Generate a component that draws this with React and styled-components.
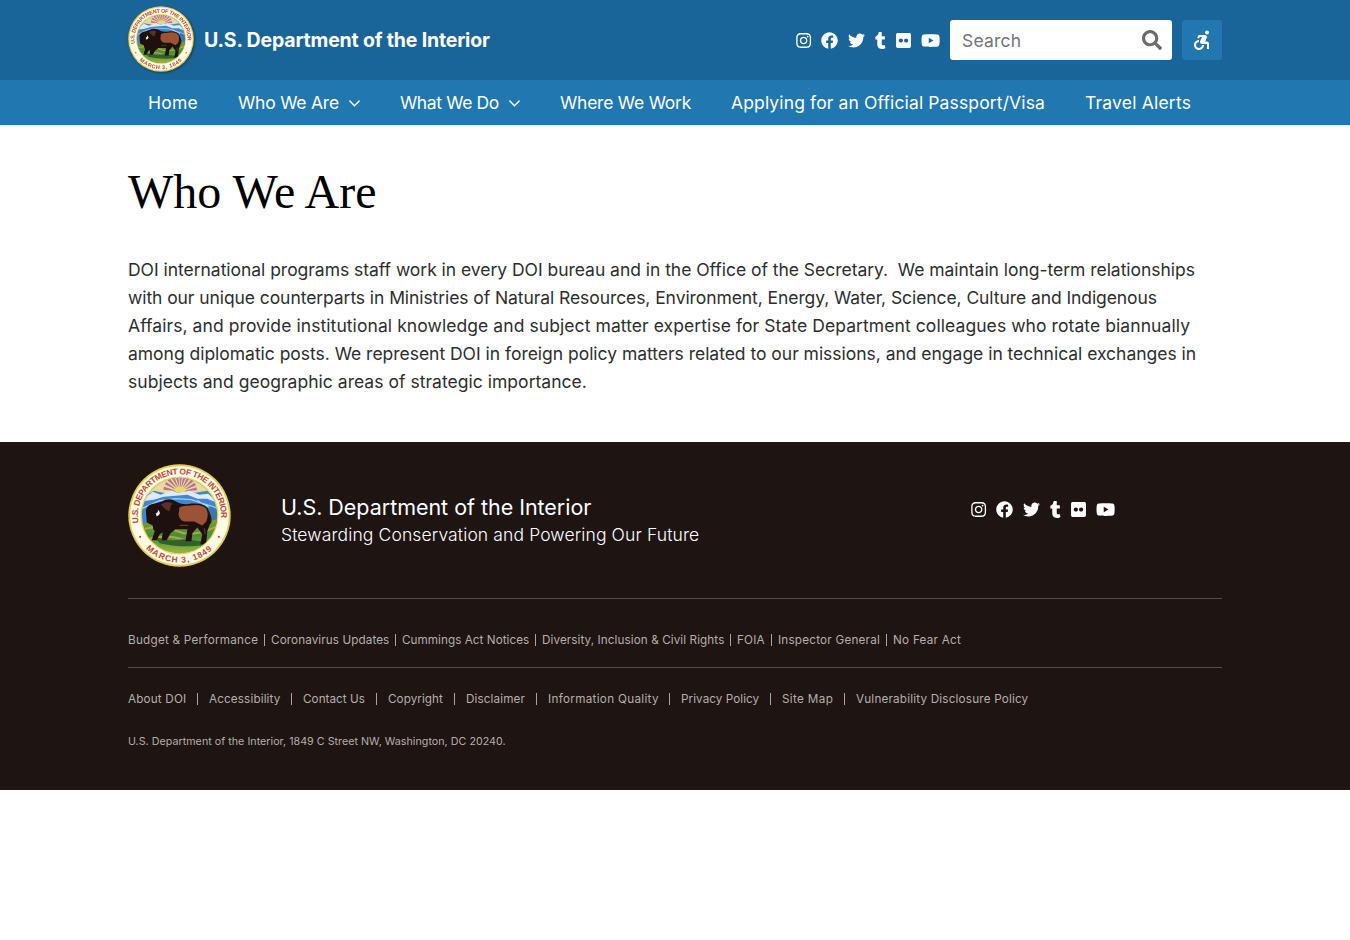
import React from "react";
import styled, { createGlobalStyle } from "styled-components";
import {
  FaInstagram,
  FaFacebook,
  FaTwitter,
  FaTumblr,
  FaFlickr,
  FaYoutube,
  FaSearch,
} from "react-icons/fa";
import { MdAccessibleForward } from "react-icons/md";

const GlobalStyle = createGlobalStyle`
  *, *::before, *::after { box-sizing: border-box; }
  body {
    margin: 0;
    background: #fff;
    color: #2e2e2e;
    font-family: Inter, "Liberation Sans", sans-serif;
  }
  a { color: inherit; text-decoration: none; }
`;

const Container = styled.div`
  width: 1094px;
  margin: 0 auto;
`;

const Header = styled.header`
  height: 80px;
  background: #196498;
`;

const HeaderInner = styled(Container)`
  display: flex;
  align-items: center;
  height: 80px;
`;

const SealSvg = styled.svg`
  display: block;
  flex: none;
  width: ${(p) => p.$size}px;
  height: ${(p) => p.$size}px;
`;

const HeaderSeal = styled.a`
  height: 68px;
  border-radius: 50%;
  filter: drop-shadow(1px 1px 1px rgba(0, 30, 60, 0.55));
`;

const SiteName = styled.a`
  margin-left: 10px;
  color: #fff;
  font-size: 19.5px;
  font-weight: 700;
  letter-spacing: -0.17px;
  white-space: nowrap;
`;

const Social = styled.div`
  display: flex;
  align-items: center;
  gap: 10px;
  color: #fff;
`;

const SocialLink = styled.a`
  width: ${(p) => p.$width}px;
  height: 17px;

  svg {
    display: block;
    width: 100%;
    height: 100%;
    overflow: visible;
  }
`;

const HeaderSocial = styled(Social)`
  margin: 1px 10px 0 auto;
`;

const SearchBox = styled.form`
  display: flex;
  align-items: center;
  justify-content: space-between;
  width: 222px;
  height: 40px;
  padding: 0 10px 0 12px;
  border-radius: 3px;
  background: #fff;
  color: #6b6b6b;
  font-size: 20px;
`;

const SearchInput = styled.input`
  width: 150px;
  padding: 2px 0 0;
  border: 0;
  outline: 0;
  background: transparent;
  font: 400 17.5px/24px Inter, "Liberation Sans", sans-serif;
  letter-spacing: 0.2px;

  &::placeholder {
    color: #757575;
    opacity: 1;
  }
`;

const AccessButton = styled.button`
  display: flex;
  align-items: center;
  justify-content: center;
  width: 40px;
  height: 40px;
  margin-left: 10px;
  padding: 0;
  border: 0;
  border-radius: 3px;
  background: #2178b0;
  color: #fff;
  font-size: 24px;
`;

const Nav = styled.nav`
  height: 45px;
  background: #2178b0;
`;

const NavList = styled(Container)`
  display: flex;
  height: 45px;
`;

const NavItem = styled.a`
  display: flex;
  align-items: center;
  padding: 0 20px;
  color: #fff;
  font-size: 17.5px;
  letter-spacing: ${(p) => p.$track}px;
  white-space: nowrap;
  width: ${(p) => p.$width}px;

  svg {
    flex: none;
    margin: 1px 0 0 auto;
  }
`;

const Main = styled.main`
  height: 317px;
  padding-top: 37px;
`;

const Heading = styled.h1`
  margin: 0 0 35px;
  color: #000;
  font: 400 48px/59px "Liberation Serif", serif;
`;

const Paragraph = styled.p`
  margin: 0;
  font-size: 17.5px;
  line-height: 28px;
`;

const Line = styled.span`
  display: block;
  white-space: pre;
  letter-spacing: ${(p) => p.$track}px;
`;

const Footer = styled.footer`
  height: 348px;
  background: #1e1412;
  color: #fff;
`;

const Brand = styled.div`
  display: flex;
  align-items: flex-start;
  height: 157px;
  padding-top: 22px;
  border-bottom: 1px solid #534c48;
`;

const BrandText = styled.div`
  margin: 29px 0 0 50px;
`;

const BrandName = styled.div`
  font-size: 21.5px;
  line-height: 28px;
  letter-spacing: -0.03px;
`;

const Motto = styled.div`
  font-size: 17.5px;
  font-weight: 300;
  line-height: 28px;
  letter-spacing: 0.12px;
`;

const FooterSocial = styled(Social)`
  margin: 37px 107px 0 auto;
`;

const Links = styled.div`
  display: flex;
  align-items: flex-start;
  height: ${(p) => p.$height}px;
  padding-top: ${(p) => p.$top}px;
  color: #b5afac;
  font-size: 11.7px;
`;

const RuledLinks = styled(Links)`
  border-bottom: 1px solid #534c48;
`;

const FooterLink = styled.a`
  width: ${(p) => p.$width}px;
  height: 12px;
  line-height: 12px;
  letter-spacing: ${(p) => p.$track}px;
  white-space: nowrap;

  &:not(:first-child) {
    margin-left: ${(p) => p.$gap}px;
    padding-left: ${(p) => p.$gap}px;
    border-left: 1px solid #aaa4a1;
  }
`;

const Address = styled.address`
  padding-top: 1px;
  color: #b5afac;
  font-size: 10.7px;
  font-style: normal;
  line-height: 20px;
  letter-spacing: 0.03px;
`;

const sunRays = [-78, -60, -43, -27, -12, 2, 16, 31, 47, 63, 80];

function Seal({ size, id }) {
  return (
    <SealSvg $size={size} viewBox="0 0 104 104" role="img" aria-label="Seal of the Department of the Interior">
      <defs>
        <clipPath id={`${id}-clip`}>
          <circle cx="52" cy="52" r="38" />
        </clipPath>
        <path id={`${id}-top`} d="M10.6 59.5A42 42 0 1 1 93.4 59.5" />
        <path id={`${id}-bottom`} d="M18 85.5A48 48 0 0 0 86 85.5" />
        <linearGradient id={`${id}-grass`} x1="0" y1="0" x2="0" y2="1">
          <stop offset="0" stopColor="#7d9f3a" />
          <stop offset="0.45" stopColor="#43903a" />
          <stop offset="1" stopColor="#a5b93c" />
        </linearGradient>
      </defs>
      <circle cx="52" cy="52" r="51.7" fill="#e8cf4a" />
      <circle cx="52" cy="52" r="49.8" fill="#fffbe8" />
      <circle cx="52" cy="52" r="39.4" fill="#ecd94e" />
      <g clipPath={`url(#${id}-clip)`}>
        <rect x="12" y="12" width="80" height="80" fill="#3f88cf" />
        <path d="M12 12H92V31L80 27L68 29L52 26L40 30L26 27L12 36Z" fill="#ecd9a0" />
        {sunRays.map((a) => (
          <path key={a} d="M52.7 25L51.2 11H54.2Z" fill="#b8748c" transform={`rotate(${a} 52.7 28)`} />
        ))}
        <ellipse cx="52.7" cy="26" rx="6" ry="3" fill="#f2d562" />
        <path d="M12 38L25 28L33 31L43 27L51 29L62 27L72 31L81 30L92 40L80 35L70 35L60 31L48 32L36 33L26 36Z" fill="#dfeaf2" />
        <path d="M14 45L32 37L48 35L64 36L76 40L92 45M18 50L31 45M70 37L90 49" fill="none" stroke="#a4cdea" strokeWidth="1.3" />
        <path d="M76 46L84 43L92 48V62H70Z" fill="#3478b8" />
        <path d="M12 60L28 58L50 62L92 56V92H12Z" fill={`url(#${id}-grass)`} />
        <path d="M14 66Q34 61 50 68T92 62M20 76Q38 70 58 77T88 72" fill="none" stroke="#b9a33b" strokeWidth="2" />
        <path d="M26 73Q40 79 56 76L83 79L77 82Q52 85 32 80Z" fill="#335f2b" />
        <path
          d="M18 47Q19 41 27 40L34 38Q40 34 47 37Q55 42 64 40Q75 39 80 44Q84 50 83 60L80 68L79 81H73L75 71L70 64L65 70L64 78H58L60 66L48 66L43 70L39 77L34 77L35 69L32 71L29 77H24L27 68Q25 66 25 62L19 59Z"
          fill="#1d100e"
        />
        <path d="M52 44Q56 42 63 42Q74 40 79 45Q82 51 79 58L75 62L67 58L57 58Q52 57 51 51Z" fill="#9c5335" />
        <path d="M33 41Q39 37 45 40Q42 43 42 48L38 46Z" fill="#5a3224" />
        <path d="M52 62L61 62M77 65L78 71" stroke="#5f3a28" strokeWidth="1.2" />
        <path d="M28 50Q31 49 30 46Q35 50 29 53Z" fill="#f4efe0" />
        <path d="M81 48Q85 55 83 60" fill="none" stroke="#2c1710" strokeWidth="1.5" />
      </g>
      <g fill="#bf4a2c" fontFamily="Liberation Sans, sans-serif" fontSize="8.5" fontWeight="700">
        <text textLength="141" lengthAdjust="spacing">
          <textPath href={`#${id}-top`}>U.S. DEPARTMENT OF THE INTERIOR</textPath>
        </text>
        <text textLength="74" lengthAdjust="spacing">
          <textPath href={`#${id}-bottom`}>MARCH 3, 1849</textPath>
        </text>
        <circle cx="12.3" cy="73.5" r="1.1" />
        <circle cx="91.7" cy="73.5" r="1.1" />
      </g>
    </SealSvg>
  );
}

// Each link takes the advance width of its glyph so the row is evenly spaced.
const networks = [
  ["Instagram", FaInstagram, 15.3],
  ["Facebook", FaFacebook, 17],
  ["Twitter", FaTwitter, 17],
  ["Tumblr", FaTumblr, 10.8],
  ["Flickr", FaFlickr, 15],
  ["YouTube", FaYoutube, 19.2],
];

const SocialIcons = () =>
  networks.map(([name, Icon, width]) => (
    <SocialLink key={name} href="#" aria-label={name} $width={width}>
      <Icon />
    </SocialLink>
  ));

const Chevron = () => (
  <svg width="11" height="7" viewBox="0 0 11 7" fill="none" stroke="#fff" strokeWidth="1.5" strokeLinecap="round" strokeLinejoin="round">
    <path d="M0.9 1L5.5 5.7L10.1 1" />
  </svg>
);

const navItems = [
  { label: "Home", width: 90, track: 0.25 },
  { label: "Who We Are", width: 162, track: -0.22, menu: true },
  { label: "What We Do", width: 160, track: -0.38, menu: true },
  { label: "Where We Work", width: 171, track: -0.23 },
  { label: "Applying for an Official Passport/Visa", width: 354, track: 0.13 },
  { label: "Travel Alerts", width: 146, track: 0.2 },
];

const bodyLines = [
  ["DOI international programs staff work in every DOI bureau and in the Office of the Secretary.  We maintain long-term relationships", -0.033],
  ["with our unique counterparts in Ministries of Natural Resources, Environment, Energy, Water, Science, Culture and Indigenous", -0.077],
  ["Affairs, and provide institutional knowledge and subject matter expertise for State Department colleagues who rotate biannually", 0.077],
  ["among diplomatic posts. We represent DOI in foreign policy matters related to our missions, and engage in technical exchanges in", -0.024],
  ["subjects and geographic areas of strategic importance.", 0.03],
];

const primaryLinks = [
  ["Budget & Performance", 130, 0.25],
  ["Coronavirus Updates", 125, 0.1],
  ["Cummings Act Notices", 134, 0.05],
  ["Diversity, Inclusion & Civil Rights", 189, 0.09],
  ["FOIA", 35, 0.15],
  ["Inspector General", 109, 0.22],
  ["No Fear Act", 90, 0.26],
];

const secondaryLinks = [
  ["About DOI", 58, 0.18],
  ["Accessibility", 83, 0.14],
  ["Contact Us", 74, 0.04],
  ["Copyright", 67, 0.07],
  ["Disclaimer", 71, 0.12],
  ["Information Quality", 122, 0.31],
  ["Privacy Policy", 90, 0.06],
  ["Site Map", 63, 0.34],
  ["Vulnerability Disclosure Policy", 190, 0.19],
];

export default function App() {
  return (
    <>
      <GlobalStyle />
      <Header>
        <HeaderInner>
          <HeaderSeal href="#">
            <Seal size={66} id="header-seal" />
          </HeaderSeal>
          <SiteName href="#">U.S. Department of the Interior</SiteName>
          <HeaderSocial>
            <SocialIcons />
          </HeaderSocial>
          <SearchBox>
            <SearchInput placeholder="Search" aria-label="Search" />
            <FaSearch />
          </SearchBox>
          <AccessButton type="button" aria-label="Accessibility">
            <MdAccessibleForward />
          </AccessButton>
        </HeaderInner>
      </Header>
      <Nav>
        <NavList>
          {navItems.map((item) => (
            <NavItem key={item.label} href="#" $width={item.width} $track={item.track}>
              {item.label}
              {item.menu && <Chevron />}
            </NavItem>
          ))}
        </NavList>
      </Nav>
      <Main>
        <Container>
          <Heading>Who We Are</Heading>
          <Paragraph>
            {bodyLines.map(([text, track]) => (
              <Line key={text} $track={track}>{text}</Line>
            ))}
          </Paragraph>
        </Container>
      </Main>
      <Footer>
        <Container>
          <Brand>
            <Seal size={103} id="footer-seal" />
            <BrandText>
              <BrandName>U.S. Department of the Interior</BrandName>
              <Motto>Stewarding Conservation and Powering Our Future</Motto>
            </BrandText>
            <FooterSocial>
              <SocialIcons />
            </FooterSocial>
          </Brand>
          <RuledLinks $height={69} $top={35}>
            {primaryLinks.map(([label, width, track]) => (
              <FooterLink key={label} href="#" $width={width} $track={track} $gap={6}>{label}</FooterLink>
            ))}
          </RuledLinks>
          <Links $height={63} $top={25}>
            {secondaryLinks.map(([label, width, track]) => (
              <FooterLink key={label} href="#" $width={width} $track={track} $gap={11}>{label}</FooterLink>
            ))}
          </Links>
          <Address>U.S. Department of the Interior, 1849 C Street NW, Washington, DC 20240.</Address>
        </Container>
      </Footer>
    </>
  );
}
